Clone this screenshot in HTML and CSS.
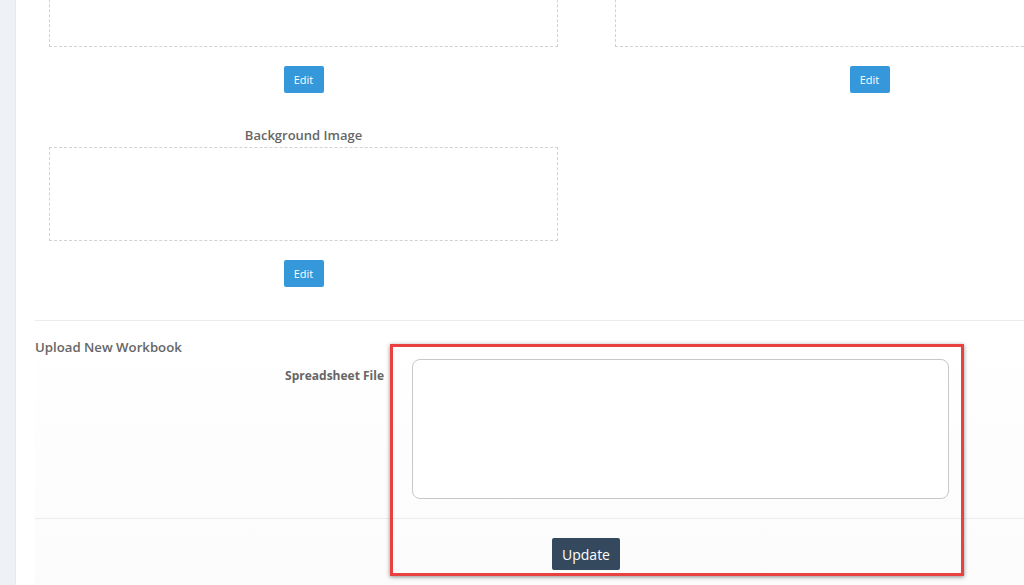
FILE: index.html
```html
<!DOCTYPE html>
<html lang="en">

<head>
    <meta charset="UTF-8">
    <title>Workbook Settings</title>
    <link rel="stylesheet" href="styles.css">
</head>

<body>
    <div class="page">
        <div class="sidebar"></div>

        <div class="main">
            <div class="images">
                <div class="slot">
                    <div class="drop first"></div>
                    <button type="button" class="btn-edit">Edit</button>
                </div>
                <div class="slot">
                    <div class="drop first"></div>
                    <button type="button" class="btn-edit">Edit</button>
                </div>
                <div class="slot">
                    <div class="slot-title">Background Image</div>
                    <div class="drop"></div>
                    <button type="button" class="btn-edit">Edit</button>
                </div>
            </div>

            <div class="upload">
                <h3 class="section-title">Upload New Workbook</h3>
                <div class="form-row">
                    <label class="form-label" for="sheet">Spreadsheet File</label>
                    <div class="file-box" id="sheet"></div>
                </div>
                <div class="actions">
                    <button type="button" class="btn-update">Update</button>
                </div>
            </div>
        </div>

        <!-- highlight around the upload form -->
        <div class="highlight"></div>
    </div>
</body>

</html>
```

FILE: styles.css
```css
* {
    padding: 0;
    margin: 0;
    box-sizing: border-box;
    font-family: "Open Sans", "Liberation Sans", sans-serif;
}

body {
    background-color: #fff;
    overflow: hidden;
    height: 585px;
}

.page {
    position: relative;
    display: flex;
    width: 1024px;
    min-height: 585px;
    overflow: hidden;
}

.sidebar {
    width: 16px;
    flex-shrink: 0;
    background-color: #eef1f6;
    border-right: 1px solid #e6e9ef;
}

.main {
    flex: 1;
    min-width: 0;
    padding-left: 19px;
    overflow: hidden;
}

/* image slots, two per row */
.images {
    display: grid;
    grid-template-columns: 509px 509px;
    column-gap: 57px;
    row-gap: 33px;
    padding-left: 14px;
    margin-top: -60px;
    padding-bottom: 33px;
    border-bottom: 1px solid #ececec;
}

.slot {
    display: flex;
    flex-direction: column;
    align-items: center;
}

.slot-title {
    font-size: 13px;
    font-weight: 600;
    color: #666;
    line-height: 18px;
    margin-bottom: 3px;
}

.drop {
    width: 100%;
    height: 94px;
    border: 1px dashed #d2d2d2;
}

.drop.first {
    height: 107px;
}

.btn-edit {
    margin-top: 19px;
    width: 40px;
    height: 27px;
    background-color: #3498db;
    color: #fff;
    border: 0;
    border-radius: 2px;
    font-size: 11px;
    cursor: pointer;
}

/* upload section */
.upload {
    background-image: linear-gradient(to bottom, #fff, #fbfbfb);
    padding-top: 17px;
    padding-bottom: 40px;
}

.section-title {
    font-size: 13.2px;
    font-weight: 600;
    color: #666;
    line-height: 18px;
}

.form-row {
    display: flex;
    margin-top: 3px;
    padding-bottom: 19px;
    border-bottom: 1px solid #ececec;
}

.form-label {
    width: 349px;
    text-align: right;
    font-size: 12px;
    font-weight: 700;
    color: #666;
    line-height: 17px;
    padding-top: 8px;
}

.file-box {
    margin-left: 28px;
    width: 537px;
    height: 140px;
    border: 1px solid #c8c8c8;
    border-radius: 8px;
    background-color: #fff;
}

.actions {
    padding-left: 517px;
    padding-top: 19px;
}

.btn-update {
    width: 68px;
    height: 32px;
    background-color: #34495e;
    color: #fff;
    border: 0;
    border-radius: 2px;
    font-size: 14px;
    cursor: pointer;
}

.highlight {
    position: absolute;
    left: 390px;
    top: 344px;
    width: 574px;
    height: 232px;
    border: 3px solid #e8413f;
    box-shadow: 0 1px 4px rgba(0, 0, 0, 0.45);
}
```
